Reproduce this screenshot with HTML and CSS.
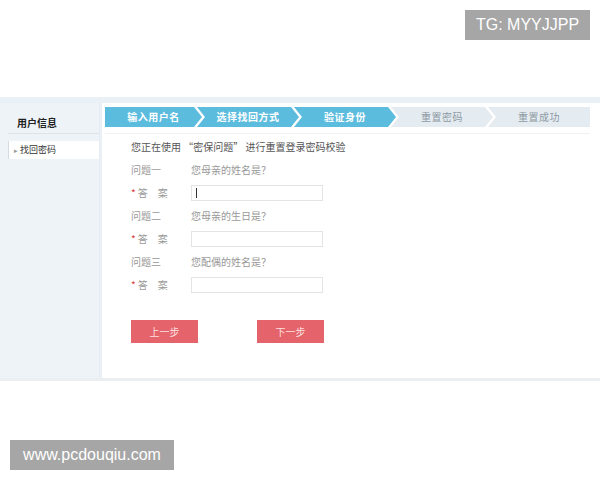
FILE: index.html
```html
<!DOCTYPE html>
<html lang="zh">
<head>
<meta charset="utf-8">
<link rel="stylesheet" href="styles.css">
</head>
<body>
<div class="frame">
  <aside class="side">
    <div class="side-title">用户信息</div>
    <div class="side-item"><span class="tri">▸</span>找回密码</div>
  </aside>
  <main class="main">
    <div class="steps">
      <div class="step on first">输入用户名</div>
      <div class="step on">选择找回方式</div>
      <div class="step on">验证身份</div>
      <div class="step">重置密码</div>
      <div class="step last">重置成功</div>
    </div>
    <div class="form">
      <p class="intro">您正在使用 “密保问题” 进行重置登录密码校验</p>
      <div class="row"><span class="lbl">问题一</span><span class="q">您母亲的姓名是？</span></div>
      <div class="row"><span class="lbl"><i class="star">*</i>答　案</span><span class="input"><span class="caret"></span></span></div>
      <div class="row"><span class="lbl">问题二</span><span class="q">您母亲的生日是？</span></div>
      <div class="row"><span class="lbl"><i class="star">*</i>答　案</span><span class="input"></span></div>
      <div class="row"><span class="lbl">问题三</span><span class="q">您配偶的姓名是？</span></div>
      <div class="row"><span class="lbl"><i class="star">*</i>答　案</span><span class="input"></span></div>
      <div class="btns">
        <button class="btn">上一步</button>
        <button class="btn">下一步</button>
      </div>
    </div>
  </main>
</div>
<div class="wm wm-top">TG: MYYJJPP</div>
<div class="wm wm-bottom">www.pcdouqiu.com</div>
</body>
</html>
```
FILE: styles.css
```css
html, body {
  margin: 0;
  padding: 0;
  background: #fff;
  width: 600px;
  height: 480px;
  overflow: hidden;
  font-family: "Noto Sans CJK SC", "Liberation Sans", sans-serif;
}
.frame {
  margin-top: 97px;
  height: 275px;
  display: flex;
  background: #e9f0f6;
  padding-top: 6px;
  border-bottom: 3px solid #eceff2;
}
.side {
  width: 101px;
  background: #eef3f8;
  padding: 14px 0 0 8px;
  box-sizing: border-box;
  border-right: 1px solid #e6ecf1;
}
.side-title {
  font-size: 10px;
  font-weight: bold;
  color: #222;
  padding: 0 0 4px 9px;
  border-bottom: 1px solid #dde3e8;
  line-height: 12px;
}
.side-item {
  margin-top: 7px;
  background: #fff;
  height: 18px;
  line-height: 18px;
  font-size: 9px;
  color: #333;
  padding-left: 5px;
  border-left: 1px solid #d5dbe0;
}
.tri {
  font-size: 7px;
  color: #999;
  margin-right: 2px;
}
.main {
  flex: 1;
  background: #fff;
  margin-left: 2px;
  padding: 4px 10px 0 3px;
}
.steps {
  display: flex;
  height: 20px;
  padding-bottom: 6px;
  border-bottom: 1px solid #f0f2f4;
}
.step {
  width: 102px;
  height: 20px;
  line-height: 20px;
  text-align: center;
  font-size: 10px;
  color: #8e9aa3;
  background: #e4ebf1;
  margin-left: -5px;
  letter-spacing: 0.5px;
  clip-path: polygon(0 0, calc(100% - 8px) 0, 100% 50%, calc(100% - 8px) 100%, 0 100%, 8px 50%);
}
.step.on {
  background: #5cbcde;
  color: #fff;
  font-weight: bold;
}
.step.first {
  margin-left: 0;
  width: 97px;
  clip-path: polygon(0 0, calc(100% - 8px) 0, 100% 50%, calc(100% - 8px) 100%, 0 100%);
}
.step.last {
  width: 102px;
  clip-path: polygon(0 0, 100% 0, 100% 100%, 0 100%, 8px 50%);
}
.form {
  padding-left: 26px;
}
.intro {
  margin: 6px 0 4px;
  font-size: 10px;
  color: #555;
  line-height: 14px;
}
.row {
  display: flex;
  align-items: center;
  height: 23px;
  font-size: 10px;
  color: #999;
}
.lbl {
  width: 60px;
}
.star {
  font-style: normal;
  color: #d9363e;
  margin-right: 2px;
}
.q {
  color: #999;
}
.input {
  width: 132px;
  height: 16px;
  border: 1px solid #e2e4e6;
  display: flex;
  align-items: center;
  padding-left: 4px;
  box-sizing: border-box;
}
.caret {
  width: 1px;
  height: 10px;
  background: #333;
}
.btns {
  display: flex;
  gap: 59px;
  margin-top: 24px;
}
.btn {
  width: 67px;
  height: 23px;
  border: none;
  background: #e5636a;
  color: #fde0e0;
  font-size: 10px;
  font-family: "Noto Sans CJK SC", sans-serif;
  padding: 0;
}
.wm {
  position: absolute;
  background: #a6a6a6;
  color: #fff;
  font-family: "Liberation Sans", Arial, sans-serif;
  font-size: 16px;
  line-height: 30px;
  text-align: center;
}
.wm-top {
  left: 465px;
  top: 10px;
  width: 125px;
  height: 30px;
}
.wm-bottom {
  left: 10px;
  top: 440px;
  width: 164px;
  height: 30px;
}
```
